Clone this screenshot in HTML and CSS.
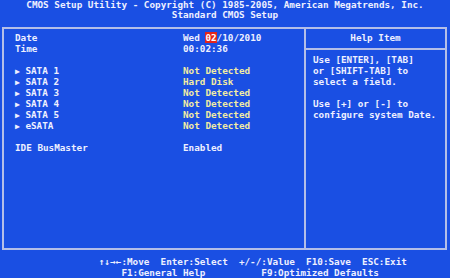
FILE: index.html
```html
<!DOCTYPE html>
<html lang="en">
    <head>
        <meta charset="UTF-8">
        <meta name="viewport" content="width=device-width, initial-scale=1.0">
        <title>Standard CMOS Setup</title>
        <link rel="stylesheet" href="styles.css">
    </head>
    <body>
        <div class="screen">
            <!-- 标题 -->
            <div class="title">
                <div>CMOS Setup Utility - Copyright (C) 1985-2005, American Megatrends, Inc.</div>
                <div>Standard CMOS Setup</div>
            </div>

            <div class="frame">
                <div class="settings">
                    <div class="row"><span>Date</span><span class="val">Wed <span class="sel">02</span>/10/2010</span></div>
                    <div class="row"><span>Time</span><span class="val">00:02:36</span></div>
                    <div class="row blank"></div>
                    <div class="row"><span><i class="arrow">▶</i> SATA 1</span><span class="info">Not Detected</span></div>
                    <div class="row"><span><i class="arrow">▶</i> SATA 2</span><span class="info">Hard Disk</span></div>
                    <div class="row"><span><i class="arrow">▶</i> SATA 3</span><span class="info">Not Detected</span></div>
                    <div class="row"><span><i class="arrow">▶</i> SATA 4</span><span class="info">Not Detected</span></div>
                    <div class="row"><span><i class="arrow">▶</i> SATA 5</span><span class="info">Not Detected</span></div>
                    <div class="row"><span><i class="arrow">▶</i> eSATA</span><span class="info">Not Detected</span></div>
                    <div class="row blank"></div>
                    <div class="row"><span>IDE BusMaster</span><span class="val">Enabled</span></div>
                </div>
                <div class="help">
                    <div class="help-head">Help Item</div>
                    <div class="help-body">Use [ENTER], [TAB]
or [SHIFT-TAB] to
select a field.

Use [+] or [-] to
configure system Date.</div>
                </div>
            </div>

            <!-- 按键说明 -->
            <div class="keys">↑↓→←:Move  Enter:Select  +/-/:Value  F10:Save  ESC:Exit
    F1:General Help          F9:Optimized Defaults</div>
        </div>
    </body>
</html>
```

FILE: styles.css
```css
*{
    margin: 0;
    padding: 0;
}
body{
    background-color: #1a4fe3;
    font-family: "DejaVu Sans Mono", "Liberation Mono", monospace;
    font-weight: bold;
    font-size: 9.3px;
    line-height: 11px;
    color: #eef0ff;
}
.screen{
    width: 450px;
    height: 278px;
    overflow: hidden;
}
.title{
    height: 27px;
    line-height: 10px;
    text-align: center;
}
.frame{
    margin-left: 2px;
    width: 441px;
    height: 219px;
    border: 2px solid #b4bee8;
    display: grid;
    grid-template-columns: 1fr 141px;
}
.settings{
    padding: 3px 0 0 11px;
}
.row{
    display: grid;
    grid-template-columns: 168px 1fr;
    height: 11px;
}
.arrow{
    font-style: normal;
    font-size: 8px;
}
.info{
    color: #f2eca2;
}
.sel{
    background-color: #e2261c;
    color: #fff;
}
.help{
    border-left: 2px solid #b4bee8;
}
.help-head{
    height: 16px;
    padding-top: 3px;
    text-align: center;
    border-bottom: 2px solid #b4bee8;
}
.help-body{
    padding: 4px 0 0 7px;
    white-space: pre;
}
.keys{
    padding: 6px 0 0 99px;
    white-space: pre;
}
```
